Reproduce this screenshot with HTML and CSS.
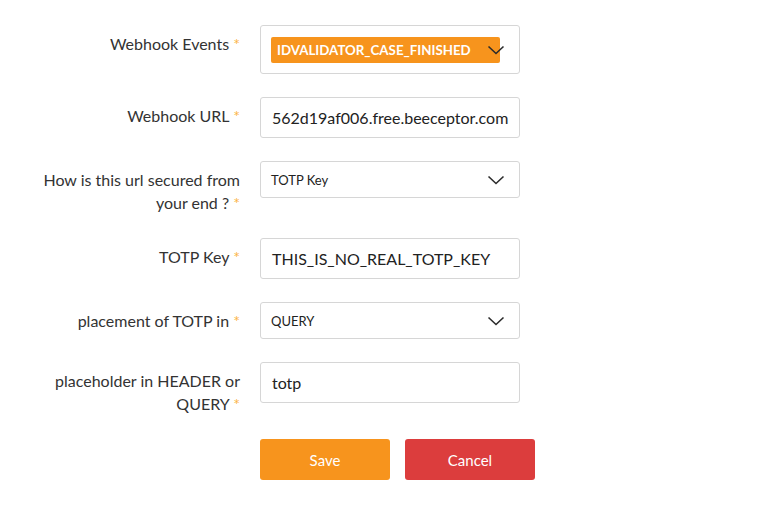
FILE: index.html
```html
<!DOCTYPE html>
<html>
<head>
<meta charset="utf-8">
<link rel="stylesheet" href="styles.css">
</head>
<body>
<form class="form">
  <div class="row">
    <label class="label">Webhook Events <span class="req">*</span></label>
    <div class="control multi">
      <span class="tag">IDVALIDATOR_CASE_FINISHED</span>
      <svg class="chev chev-over" width="18" height="10" viewBox="0 0 18 10"><path d="M1.5 1.5 L9 8.5 L16.5 1.5" fill="none" stroke="#2b2b2b" stroke-width="1.6"/></svg>
    </div>
  </div>
  <div class="row">
    <label class="label">Webhook URL <span class="req">*</span></label>
    <div class="control input">562d19af006.free.beeceptor.com</div>
  </div>
  <div class="row">
    <label class="label">How is this url secured from your end ?&nbsp;<span class="req">*</span></label>
    <div class="control select"><span>TOTP Key</span>
      <svg class="chev" width="18" height="10" viewBox="0 0 18 10"><path d="M1.5 1.5 L9 8.5 L16.5 1.5" fill="none" stroke="#2b2b2b" stroke-width="1.6"/></svg>
    </div>
  </div>
  <div class="row">
    <label class="label">TOTP Key <span class="req">*</span></label>
    <div class="control input">THIS_IS_NO_REAL_TOTP_KEY</div>
  </div>
  <div class="row">
    <label class="label">placement of TOTP in <span class="req">*</span></label>
    <div class="control select"><span>QUERY</span>
      <svg class="chev" width="18" height="10" viewBox="0 0 18 10"><path d="M1.5 1.5 L9 8.5 L16.5 1.5" fill="none" stroke="#2b2b2b" stroke-width="1.6"/></svg>
    </div>
  </div>
  <div class="row">
    <label class="label">placeholder in HEADER or QUERY&nbsp;<span class="req">*</span></label>
    <div class="control input">totp</div>
  </div>
  <div class="actions">
    <button type="button" class="btn save">Save</button>
    <button type="button" class="btn cancel">Cancel</button>
  </div>
</form>
</body>
</html>
```
FILE: styles.css
```css
html, body {
  margin: 0;
  padding: 0;
  background: #ffffff;
  font-family: Lato, "Open Sans", sans-serif;
  color: #333333;
}

.form {
  padding: 25px 0 0 30px;
}

.row {
  display: flex;
  align-items: flex-start;
  gap: 20px;
  margin-bottom: 23px;
}

.label {
  width: 210px;
  flex: none;
  text-align: right;
  font-size: 16px;
  line-height: 23px;
  padding: 7px 0 1px;
  color: #333333;
}

.req {
  color: #fbb44a;
}

.control {
  box-sizing: border-box;
  width: 260px;
  flex: none;
  border: 1px solid #d6d6d6;
  border-radius: 3px;
  background: #ffffff;
  position: relative;
  display: flex;
  align-items: center;
}

.multi {
  height: 49px;
  padding: 0 10px;
}

.tag {
  box-sizing: border-box;
  width: 229px;
  height: 26px;
  background: #f7941d;
  color: #ffffff;
  font-weight: bold;
  font-size: 13.3px;
  line-height: 26px;
  padding-left: 6px;
  border-radius: 2px;
}

.chev-over {
  position: absolute;
  left: 226px;
  top: 19px;
}

.input {
  height: 41px;
  padding-left: 11px;
  font-size: 16px;
  color: #222222;
}

.select {
  height: 37px;
  padding: 0 14px 0 10px;
  font-size: 13px;
  color: #222222;
  justify-content: space-between;
}

.select .chev {
  margin-top: 1px;
}

.actions {
  display: flex;
  gap: 15px;
  padding-left: 230px;
}

.btn {
  width: 130px;
  height: 41px;
  border: none;
  border-radius: 3px;
  color: #ffffff;
  font-family: Lato, "Open Sans", sans-serif;
  font-size: 15px;
  cursor: pointer;
}

.save {
  background: #f7941d;
}

.cancel {
  background: #dc3d3d;
}
```
